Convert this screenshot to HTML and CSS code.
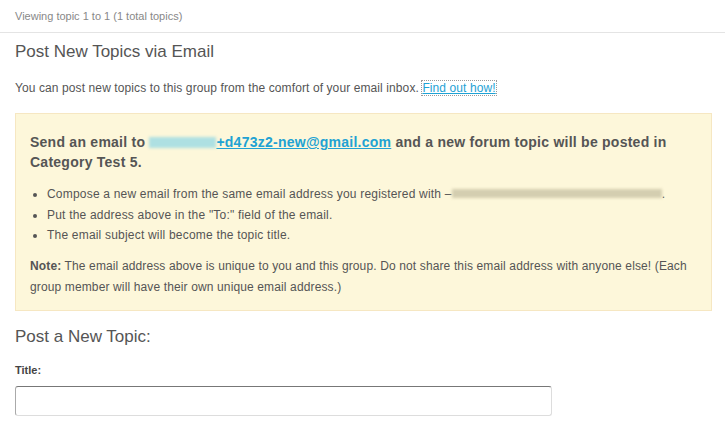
FILE: index.html
```html
<!DOCTYPE html>
<html>
<head>
<meta charset="utf-8">
<link rel="stylesheet" href="styles.css">
</head>
<body>
<div class="page">
  <div class="viewing">Viewing topic 1 to 1 (1 total topics)</div>
  <div class="content">
    <h3 class="title">Post New Topics via Email</h3>
    <p class="intro">You can post new topics to this group from the comfort of your email inbox. <a class="focus-link" href="#">Find out how!</a></p>
    <div class="notice">
      <p class="send">Send an email to <a class="mail" href="#"><span class="blur blur-cyan"></span>+d473z2-new@gmail.com</a> and a new forum topic will be posted in Category Test 5.</p>
      <ul class="steps">
        <li>Compose a new email from the same email address you registered with &ndash;<span class="blur blur-gray"></span>.</li>
        <li>Put the address above in the "To:" field of the email.</li>
        <li>The email subject will become the topic title.</li>
      </ul>
      <p class="note"><strong>Note:</strong> The email address above is unique to you and this group. Do not share this email address with anyone else! (Each group member will have their own unique email address.)</p>
    </div>
    <h3 class="title post">Post a New Topic:</h3>
    <label class="label">Title:</label>
    <div class="input"></div>
  </div>
</div>
</body>
</html>
```
FILE: styles.css
```css
* { box-sizing: border-box; }
html, body { margin: 0; padding: 0; background: #fff; }
body {
  font-family: "Liberation Sans", Arial, sans-serif;
  color: #555;
  width: 725px;
  height: 429px;
  overflow: hidden;
}
.viewing {
  font-size: 11px;
  color: #888;
  padding: 10px 15px 0 15px;
  height: 33px;
  border-bottom: 1px solid #e4e4e4;
}
.content {
  padding: 0 14px 0 15px;
}
.title {
  font-size: 17px;
  font-weight: normal;
  color: #555;
  margin: 9px 0 0 0;
  line-height: 20px;
}
.intro {
  font-size: 12px;
  margin: 18px 0 0 0;
  line-height: 16px;
  letter-spacing: 0.1px;
}
.focus-link {
  color: #1ea2d5;
  outline: 1px dotted #999;
  outline-offset: 0;
}
.notice {
  margin-top: 17px;
  background: #fdf7da;
  border: 1px solid #f6e7c2;
  padding: 18px 14px 12px 14px;
  width: 697px;
}
.send {
  margin: 0;
  font-size: 14px;
  font-weight: bold;
  line-height: 20px;
  letter-spacing: 0.25px;
  color: #555;
}
.mail {
  color: #21a2d3;
}
.blur {
  display: inline-block;
  vertical-align: middle;
  filter: blur(1.5px);
}
.blur-cyan {
  width: 67px;
  height: 11px;
  background: #aee0e2;
  margin-bottom: 2px;
}
.blur-gray {
  width: 210px;
  height: 9px;
  background: #d4ceb0;
  margin-bottom: 2px;
}
.steps {
  margin: 12px 0 0 0;
  padding-left: 17px;
  font-size: 12px;
  line-height: 20.5px;
  letter-spacing: 0.2px;
}
.steps li { padding-left: 0; }
.note {
  margin: 10px 0 0 0;
  font-size: 12px;
  line-height: 21px;
  letter-spacing: 0.13px;
}
.note strong { color: #555; }
.title.post {
  margin-top: 16px;
}
.label {
  display: block;
  font-size: 11px;
  font-weight: bold;
  margin-top: 16px;
  line-height: 14px;
  color: #444;
}
.input {
  margin-top: 9px;
  width: 537px;
  height: 30px;
  border: 1px solid #ddd;
  border-top-color: #777;
  border-left-color: #aaa;
  border-radius: 3px;
}
```
